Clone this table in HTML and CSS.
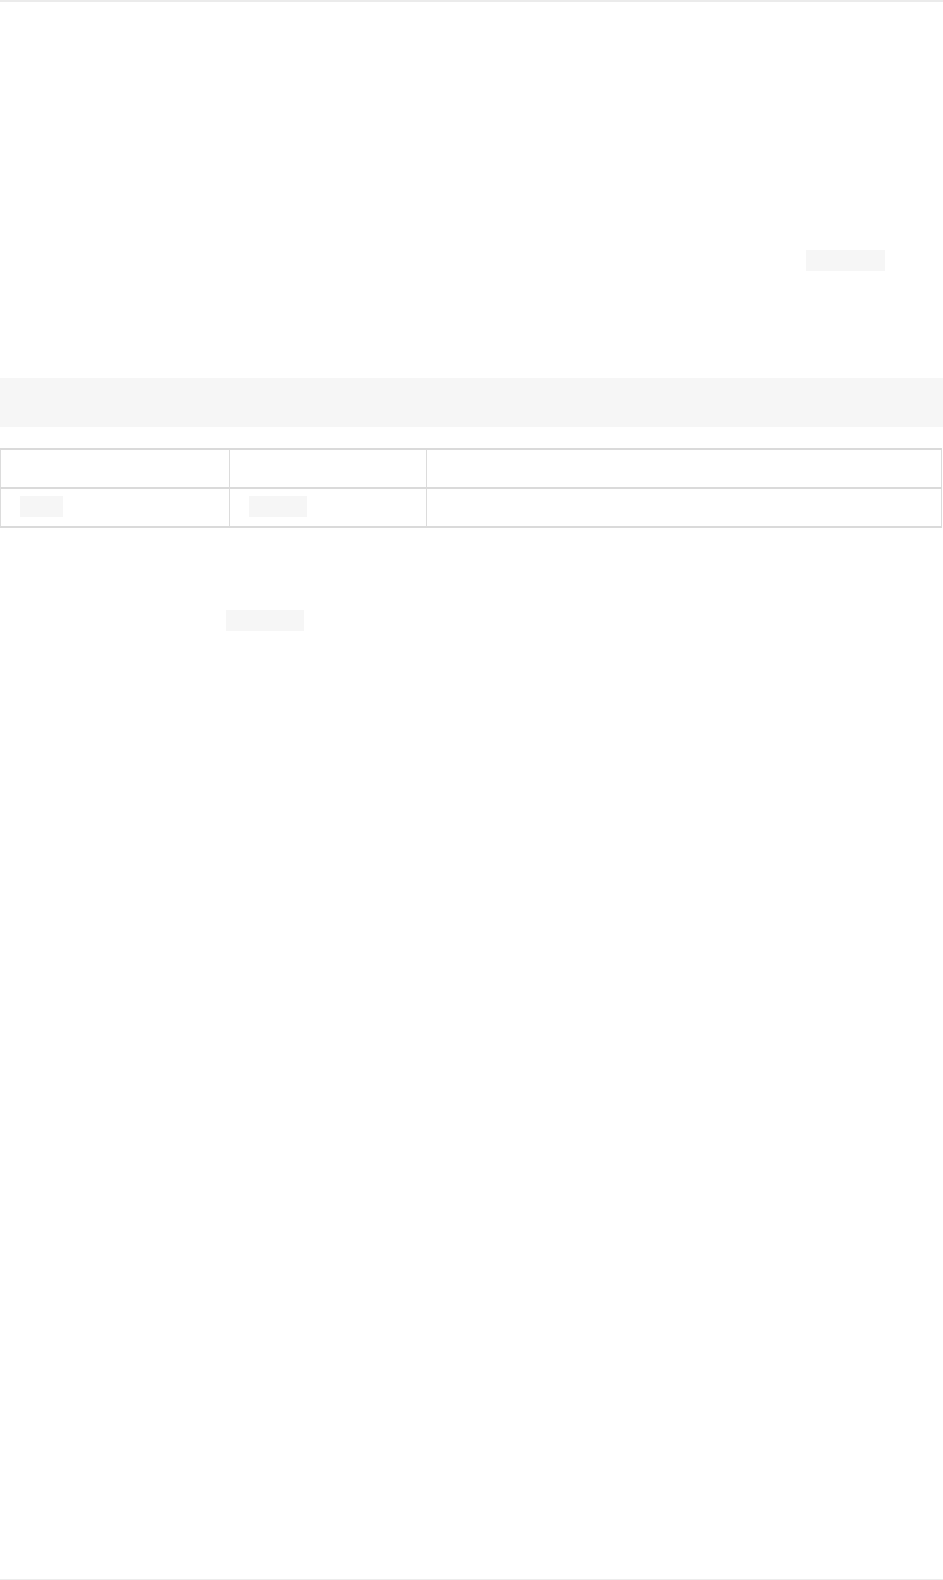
FILE: index.html
```html
<!DOCTYPE html>
<html lang="en">
<head>
<meta charset="utf-8">
<title>Document</title>
<link rel="stylesheet" href="styles.css">
</head>
<body>
<div class="page">
  <main class="content">
    <p class="line line-first"><span class="gap gap-806"></span><code class="code w-79"></code></p>
    <pre class="block"></pre>
    <table class="grid">
      <tr>
        <td class="c1"></td>
        <td class="c2"></td>
        <td class="c3"></td>
      </tr>
      <tr>
        <td class="c1"><code class="code w-43"></code></td>
        <td class="c2"><code class="code w-58"></code></td>
        <td class="c3"></td>
      </tr>
    </table>
    <p class="line line-last"><span class="gap gap-226"></span><code class="code w-78"></code></p>
  </main>
</div>
</body>
</html>
```

FILE: styles.css
```css
html, body {
  margin: 0;
  padding: 0;
  background: #ffffff;
}

body {
  font-family: "Liberation Sans", Arial, sans-serif;
  color: #ffffff;
}

.page {
  box-sizing: border-box;
  min-height: 1580px;
  border-top: 2px solid #ebebeb;
  border-bottom: 1px solid #ececec;
  display: flex;
  flex-direction: column;
}

.content {
  display: flex;
  flex-direction: column;
}

.line {
  margin: 0;
  display: flex;
  height: 21px;
}

.line-first {
  margin-top: 248px;
}

.line-last {
  margin-top: 82px;
}

.gap {
  display: block;
}

.gap-806 { width: 806px; }
.gap-226 { width: 226px; }

.code {
  display: block;
  height: 21px;
  background: #f6f6f6;
}

.w-79 { width: 79px; }
.w-78 { width: 78px; }
.w-43 { width: 43px; }
.w-58 { width: 58px; }

.block {
  margin: 107px 0 0 0;
  height: 49px;
  width: 943px;
  background: #f6f6f6;
}

.grid {
  margin-top: 21px;
  width: 942px;
  border-collapse: collapse;
  table-layout: fixed;
}

.grid td {
  padding: 0;
  height: 37px;
  border-left: 1px solid #dcdcdc;
  border-right: 1px solid #dcdcdc;
  border-top: 2px solid #dadada;
  border-bottom: 2px solid #dadada;
  vertical-align: top;
}

.grid .c1 { width: 228px; }
.grid .c2 { width: 196px; }

.grid td .code {
  margin: 7px 0 0 19px;
}
```
